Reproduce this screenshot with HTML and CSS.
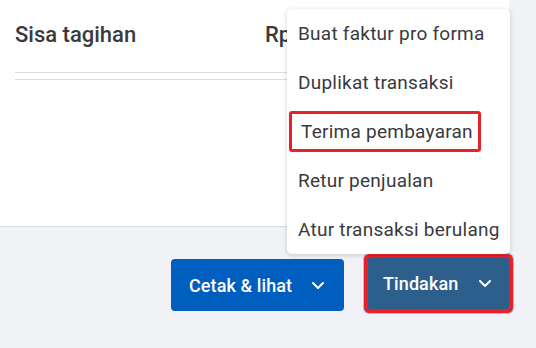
FILE: index.html
```html
<!DOCTYPE html>
<html lang="id">
<head>
<meta charset="utf-8">
<link rel="stylesheet" href="styles.css">
</head>
<body>
<div class="page">
  <section class="card">
    <div class="row">
      <span class="label">Sisa tagihan</span>
      <span class="amount">Rp0,00</span>
    </div>
    <div class="rule"></div>
    <div class="rule second"></div>
  </section>
  <footer class="footer">
    <button class="btn btn-print">Cetak &amp; lihat
      <svg class="chev" width="12" height="7" viewBox="0 0 12 7"><path d="M1 1l5 5 5-5" fill="none" stroke="#fff" stroke-width="2" stroke-linecap="round" stroke-linejoin="round"/></svg>
    </button>
    <button class="btn btn-action">Tindakan
      <svg class="chev" width="12" height="7" viewBox="0 0 12 7"><path d="M1 1l5 5 5-5" fill="none" stroke="#fff" stroke-width="2" stroke-linecap="round" stroke-linejoin="round"/></svg>
    </button>
  </footer>
  <ul class="menu">
    <li>Buat faktur pro forma</li>
    <li>Duplikat transaksi</li>
    <li><span class="mark">Terima pembayaran</span></li>
    <li>Retur penjualan</li>
    <li>Atur transaksi berulang</li>
  </ul>
</div>
</body>
</html>
```
FILE: styles.css
```css
html, body {
  margin: 0;
  padding: 0;
  background: #f1f2f6;
  font-family: Roboto, "Liberation Sans", sans-serif;
  color: #393a3d;
}
.page {
  position: relative;
  width: 536px;
  height: 348px;
  overflow: hidden;
}
.card {
  width: 509px;
  height: 227px;
  background: #fff;
  border-bottom: 1px solid #dcdde0;
  padding-top: 22px;
  box-sizing: border-box;
}
.row {
  display: flex;
  align-items: center;
  padding-left: 15px;
}
.label {
  width: 250px;
  font-size: 22px;
  font-weight: 500;
  line-height: 26px;
}
.amount {
  font-size: 22px;
  font-weight: 500;
  line-height: 26px;
}
.rule {
  margin: 24px 0 0 15px;
  height: 1px;
  background: #dcdde0;
}
.rule.second {
  margin-top: 6px;
}
.footer {
  display: flex;
  justify-content: flex-end;
  gap: 24px;
  padding: 32px 27px 0 0;
}
.btn {
  display: flex;
  align-items: center;
  height: 52px;
  border: none;
  border-radius: 4px;
  color: #fff;
  font-family: Roboto, "Liberation Sans", sans-serif;
  font-size: 18px;
  font-weight: 500;
  letter-spacing: 0.1px;
  cursor: pointer;
}
.btn-print {
  width: 173px;
  background: #005ebf;
  padding: 0 20px 0 18px;
  justify-content: space-between;
}
.btn-action {
  width: 141px;
  height: 51px;
  margin-top: -1px;
  background: #2c5f8b;
  padding: 0 18px 0 15px;
  justify-content: space-between;
  box-shadow: 0 0 0 4px #e8202a, 0 0 0 5px #a9c3e8;
  border-radius: 2px;
}
.menu {
  position: absolute;
  left: 287px;
  top: 9px;
  width: 223px;
  margin: 0;
  padding: 0;
  list-style: none;
  background: #fff;
  border-radius: 5px;
  box-shadow: 0 1px 5px rgba(0, 0, 0, 0.18);
}
.menu li {
  height: 49px;
  display: flex;
  align-items: center;
  padding-left: 11px;
  font-size: 19px;
  letter-spacing: 0.25px;
  white-space: nowrap;
}
.mark {
  margin-left: -9px;
  padding: 6px 5px 6px 9px;
  border: 3px solid #e8202a;
  border-radius: 3px;
  line-height: 23px;
}
```
